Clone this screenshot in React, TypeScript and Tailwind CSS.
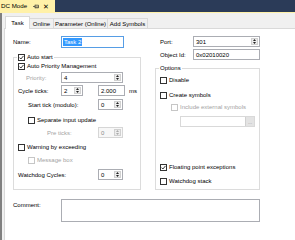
import React from 'react';

type BoxProps = { checked?: boolean; disabled?: boolean };

function CheckBox({ checked, disabled }: BoxProps) {
    return (
        <span className={`w-[7px] h-[7px] shrink-0 border bg-white flex items-center justify-center ${disabled ? 'border-[#c6c6c6]' : 'border-[#333333]'}`}>
            {checked && (
                <svg width="5" height="5" viewBox="0 0 5 5">
                    <path d="M0.5 2.6 L1.9 4 L4.5 0.9" fill="none" stroke="#222" strokeWidth="0.9" />
                </svg>
            )}
        </span>
    );
}

function Check({ label, checked, disabled, className }: BoxProps & { label: string; className: string }) {
    return (
        <div className={`h-[8px] flex items-center gap-[2px] ${className}`}>
            <CheckBox checked={checked} disabled={disabled} />
            <span className={disabled ? 'text-[#a3a3a3]' : ''}>{label}</span>
        </div>
    );
}

function Spin({ value, width, disabled }: { value: string; width: string; disabled?: boolean }) {
    return (
        <div className={`h-[11px] shrink-0 flex border ${width} ${disabled ? 'border-[#d6d6d6] bg-[#f7f7f7] text-[#8a8a8a]' : 'border-[#abadb3] bg-white'}`}>
            <span className="flex-1 flex items-center pl-[2px]">{value}</span>
            <div className="w-[7px] m-[1px] flex flex-col bg-[#ececec] border border-[#d0d0d0]">
                <div className="flex-1 flex items-center justify-center">
                    <svg width="3" height="2" viewBox="0 0 3 2"><path d="M0 2 L1.5 0 L3 2 Z" fill={disabled ? '#aaa' : '#222'} /></svg>
                </div>
                <div className="flex-1 flex items-center justify-center">
                    <svg width="3" height="2" viewBox="0 0 3 2"><path d="M0 0 L1.5 2 L3 0 Z" fill={disabled ? '#aaa' : '#222'} /></svg>
                </div>
            </div>
        </div>
    );
}

export default function App() {
    const tabs = ["Online", "Parameter (Online)", "Add Symbols"];
    const tabWidths = ["w-[24px]", "w-[54px]", "w-[40px]"];

    return (
        <div className="w-[295px] h-[240px] overflow-hidden bg-[#f0f0f0] text-[6px] leading-none text-black font-['Liberation_Sans',Arial,sans-serif]">
            {/* title bar */}
            <div className="flex h-[12px]">
                <div className="w-[55px] bg-[#fff1a8] flex items-center pl-[1px]">
                    <span className="text-[6.2px]">DC Mode</span>
                    <svg className="ml-[6px]" width="6" height="5" viewBox="0 0 6 5">
                        <path d="M0 2.5 H2 M2 0.8 V4.2 M2 1.2 H5.5 V3.8 H2 M2 3 H5.5" fill="none" stroke="#333" strokeWidth="0.7" />
                    </svg>
                    <span className="ml-[4px] text-[7px]">✕</span>
                </div>
                <div className="flex-1 bg-[#2b3b58]" />
            </div>
            <div className="h-[1px] bg-[#fff1a8]" />

            <div className="flex h-[227px]">
                <div className="w-[2px] bg-[#808080]" />
                <div className="flex-1 flex flex-col pl-[2px]">
                    {/* tabs */}
                    <div className="h-[15px] flex items-end pl-[1px]">
                        <div className="relative z-10 -mb-px w-[25px] h-[13px] bg-white border border-b-0 border-[#d9d9d9] flex items-center justify-center">Task</div>
                        {tabs.map((t, i) => (
                            <div key={t} className={`h-[10px] border border-b-0 border-l-0 border-[#d9d9d9] bg-[#f0f0f0] flex items-center justify-center ${tabWidths[i]}`}>{t}</div>
                        ))}
                    </div>

                    {/* pane */}
                    <div className="flex-1 bg-white border-l border-t border-[#d9d9d9] pl-[8px] pt-[7px]">
                        <div className="flex gap-[14px]">
                            {/* left column */}
                            <div className="w-[128px] flex flex-col">
                                <div className="h-[12px] flex items-center">
                                    <span className="w-[48px]">Name:</span>
                                    <div className="w-[63px] h-[12px] border border-[#569de5] bg-white flex items-center pl-[1px]">
                                        <span className="bg-[#3399ff] text-white px-[1px] h-[8px] flex items-center">Task 2</span>
                                    </div>
                                </div>

                                <fieldset className="mt-[5px] h-[137px] border border-[#dcdcdc] pl-[4px]">
                                    <legend className="-ml-[1px] px-[1px]">
                                        <Check label="Auto start" checked className="" />
                                    </legend>
                                    <Check label="Auto Priority Management" checked className="mt-[1px]" />
                                    <div className="mt-[2px] h-[11px] flex items-center">
                                        <span className="ml-[8px] w-[35px] text-[#a3a3a3]">Priority:</span>
                                        <Spin value="4" width="w-[62px]" />
                                    </div>
                                    <div className="mt-[2px] h-[11px] flex items-center">
                                        <span className="w-[43px]">Cycle ticks:</span>
                                        <Spin value="2" width="w-[22px]" />
                                        <div className="ml-[15px] w-[27px] h-[11px] border border-[#abadb3] flex items-center pl-[2px]">2.000</div>
                                        <span className="ml-[4px]">ms</span>
                                    </div>
                                    <div className="mt-[3px] h-[11px] flex items-center">
                                        <span className="ml-[10px] w-[70px]">Start tick (modulo):</span>
                                        <Spin value="0" width="w-[25px]" />
                                    </div>
                                    <Check label="Separate input update" className="mt-[6px] ml-[10px]" />
                                    <div className="mt-[3px] h-[11px] flex items-center">
                                        <span className="ml-[29px] w-[51px] text-[#a3a3a3]">Pre ticks:</span>
                                        <Spin value="0" width="w-[25px]" disabled />
                                    </div>
                                    <Check label="Warning by exceeding" className="mt-[5px]" />
                                    <Check label="Message box" disabled className="mt-[5px] ml-[10px]" />
                                    <div className="mt-[5px] h-[11px] flex items-center">
                                        <span className="w-[80px]">Watchdog Cycles:</span>
                                        <Spin value="0" width="w-[25px]" />
                                    </div>
                                </fieldset>
                            </div>

                            {/* right column */}
                            <div className="w-[105px] flex flex-col">
                                <div className="h-[11px] flex items-center">
                                    <span className="ml-[5px] w-[33px]">Port:</span>
                                    <Spin value="301" width="w-[67px]" />
                                </div>
                                <div className="mt-[2px] h-[11px] flex items-center">
                                    <span className="ml-[5px] w-[33px]">Object Id:</span>
                                    <div className="w-[67px] h-[11px] border border-[#abadb3] flex items-center pl-[2px]">0x02010020</div>
                                </div>

                                <fieldset className="mt-[4px] h-[126px] border border-[#dcdcdc] pl-[4px]">
                                    <legend className="-ml-[1px] px-[1px] h-[8px] flex items-center">Options</legend>
                                    <Check label="Disable" className="mt-[4px]" />
                                    <Check label="Create symbols" className="mt-[7px]" />
                                    <Check label="Include external symbols" disabled className="mt-[4px] ml-[11px]" />
                                    <div className="mt-[5px] ml-[20px] w-[75px] h-[11px] border border-[#d9d9d9] bg-white flex justify-end">
                                        <div className="w-[9px] bg-[#e3e3e3] border-l border-[#d0d0d0] flex items-end justify-center text-[5px] text-[#999] pb-[1px]">...</div>
                                    </div>
                                    <Check label="Floating point exceptions" checked className="mt-[36px]" />
                                    <Check label="Watchdog stack" className="mt-[6px]" />
                                </fieldset>
                            </div>
                        </div>

                        <div className="mt-[9px] flex items-start">
                            <span className="w-[48px] pt-[3px]">Comment:</span>
                            <div className="w-[199px] h-[23px] border border-[#abadb3] bg-white" />
                        </div>
                    </div>
                </div>
            </div>
        </div>
    );
}
